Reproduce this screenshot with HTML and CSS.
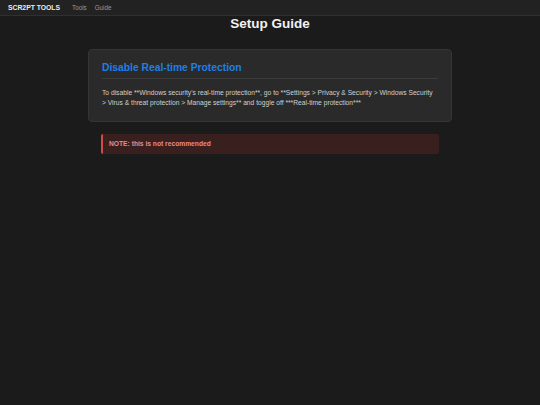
FILE: index.html
```html
<!DOCTYPE html>
<html lang="en">
<head>
    <meta charset="UTF-8">
    <meta name="viewport" content="width=device-width, initial-scale=1.0">
    <title>Setup Guide - SCR2PT TOOLS</title>
    <link rel="stylesheet" href="styles.css">
</head>
<body>

<nav class="navbar">
    <span class="brand">SCR2PT TOOLS</span>
    <a class="nav-link" href="#">Tools</a>
    <a class="nav-link" href="#">Guide</a>
</nav>

<main class="guide">
    <h1>Setup Guide</h1>

    <section class="guide-card">
        <h2>Disable Real-time Protection</h2>
        <p>To disable **Windows security's real-time protection**, go to **Settings &gt; Privacy &amp; Security &gt; Windows Security &gt; Virus &amp; threat protection &gt; Manage settings** and toggle off ***Real-time protection***</p>
    </section>

    <div class="note-box">NOTE: this is not recommended</div>
</main>

</body>
</html>
```

FILE: styles.css
```css
body {
    font-family: 'Liberation Sans', Arial, sans-serif;
    background-color: #1b1b1b;
    color: #ddd;
    margin: 0;
}
.navbar {
    display: flex;
    align-items: center;
    height: 15px;
    padding: 0 8px;
    background: #222;
    border-bottom: 1px solid #303030;
}
.brand {
    font-size: 6.8px;
    font-weight: bold;
    color: #eee;
    margin-right: 12px;
}
.nav-link {
    font-size: 6.3px;
    color: #999;
    text-decoration: none;
    margin-right: 8px;
}
.guide {
    width: 364px;
    margin: 0 auto;
}
.guide h1 {
    margin: 0 0 17px;
    font-size: 13.5px;
    line-height: 16px;
    text-align: center;
    color: #f2f2f2;
}
.guide-card {
    padding: 12px 13px 12px;
    background: #2a2a2a;
    border: 1px solid #353535;
    border-radius: 4px;
}
.guide-card h2 {
    margin: 0 0 9px;
    padding-bottom: 5px;
    font-size: 10.3px;
    color: #1e7fe6;
    border-bottom: 1px solid #3c3c3c;
}
.guide-card p {
    margin: 0;
    font-size: 6.7px;
    line-height: 10.4px;
    color: #d0d0d0;
}
.note-box {
    margin: 12px 13px 0;
    padding: 0 6px;
    height: 20px;
    line-height: 20px;
    font-size: 6.7px;
    font-weight: bold;
    color: #e68c8c;
    background: #3a1f1f;
    border-left: 2px solid #d24a4a;
    border-radius: 2px;
}
```
